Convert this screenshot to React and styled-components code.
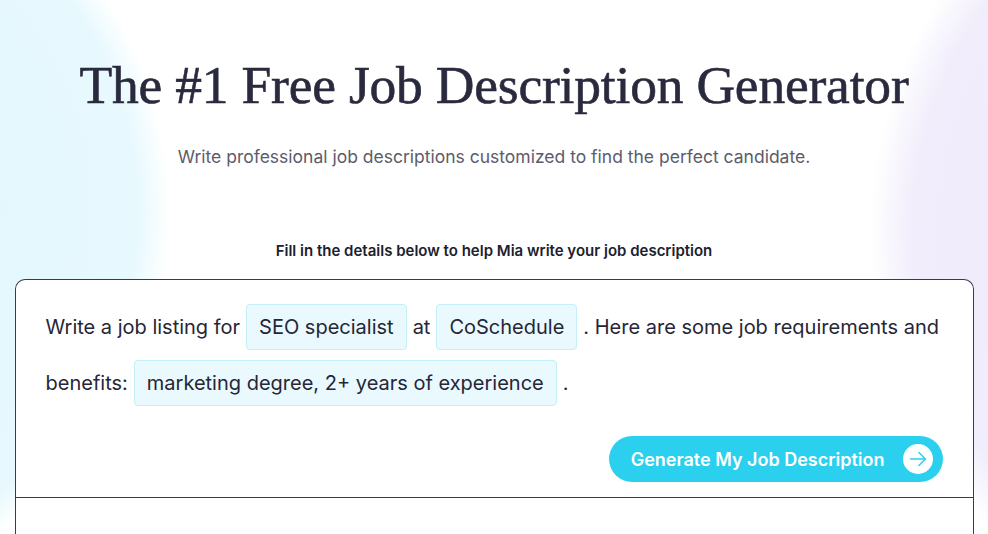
import React from 'react'
import styled, { createGlobalStyle } from 'styled-components'

const GlobalStyle = createGlobalStyle`
  html, body {
    margin: 0;
    padding: 0;
  }
  body {
    font-family: Inter, "Noto Sans", sans-serif;
    background: #ffffff;
    color: #262636;
  }
`;

const Page = styled.div`
  min-height: 534px;
  overflow: hidden;
  background:
    radial-gradient(circle 390px at -220px 210px, #dcf5fd 0%, #e8f9fe 92%, rgba(255,255,255,0) 100%),
    radial-gradient(circle 430px at 1300px 230px, #ebe5fa 0%, #f1edfb 90%, rgba(255,255,255,0) 100%),
    #ffffff;
  display: flex;
  flex-direction: column;
  align-items: center;
`;

const Title = styled.h1`
  margin: 49px 0 0;
  font-family: "Liberation Serif", "DejaVu Serif", serif;
  font-weight: 400;
  font-size: 53.5px;
  line-height: 72px;
  letter-spacing: -0.2px;
  color: #2a2a3e;
  -webkit-text-stroke: 0.6px #2a2a3e;
`;

const Subtitle = styled.p`
  margin: 24px 0 0;
  font-size: 17.5px;
  line-height: 24px;
  color: #5c5c6c;
`;

const Hint = styled.p`
  margin: 72px 0 0;
  font-size: 15px;
  font-weight: 600;
  line-height: 20px;
  color: #20202e;
`;

const Card = styled.div`
  margin-top: 18px;
  width: 959px;
  box-sizing: border-box;
  border: 1px solid #3a3a48;
  border-bottom: none;
  border-radius: 10px 10px 0 0;
  background: #ffffff;
`;

const Editor = styled.div`
  padding: 19px 30px 15px 30px;
  border-bottom: 1px solid #3a3a48;
  display: flex;
  flex-direction: column;
`;

const Prompt = styled.div`
  font-size: 20px;
  line-height: 56px;
  color: #262636;
  display: flex;
  flex-wrap: wrap;
  align-items: center;
  column-gap: 6px;
`;

const Chip = styled.span`
  display: inline-flex;
  align-items: center;
  height: 46px;
  box-sizing: border-box;
  padding: 0 12px;
  background: #e9f9fe;
  border: 1px solid #c4eef8;
  border-radius: 4px;
  line-height: 1;
`;

const Actions = styled.div`
  display: flex;
  justify-content: flex-end;
  margin-top: 25px;
`;

const Button = styled.button`
  display: flex;
  align-items: center;
  gap: 18px;
  height: 46px;
  padding: 0 10px 0 22px;
  border: none;
  border-radius: 23px;
  background: #2bd0ee;
  color: #ffffff;
  font-family: Inter, "Noto Sans", sans-serif;
  font-size: 18px;
  font-weight: 600;
  cursor: pointer;
`;

const ArrowCircle = styled.span`
  width: 30px;
  height: 30px;
  border-radius: 50%;
  background: #ffffff;
  display: flex;
  align-items: center;
  justify-content: center;
`;

const Output = styled.div`
  height: 60px;
`;

const App = () => {
  return (
    <>
      <GlobalStyle />
      <Page>
        <Title>The #1 Free Job Description Generator</Title>
        <Subtitle>Write professional job descriptions customized to find the perfect candidate.</Subtitle>
        <Hint>Fill in the details below to help Mia write your job description</Hint>
        <Card>
          <Editor>
            <Prompt>
              <span>Write a job listing for</span>
              <Chip>SEO specialist</Chip>
              <span>at</span>
              <Chip>CoSchedule</Chip>
              <span>. Here are some job requirements and</span>
              <span>benefits:</span>
              <Chip>marketing degree, 2+ years of experience</Chip>
              <span>.</span>
            </Prompt>
            <Actions>
              <Button>
                Generate My Job Description
                <ArrowCircle>
                  <svg width="22" height="22" viewBox="0 0 24 24" fill="none" stroke="#2bd0ee" strokeWidth="1.6" strokeLinecap="round" strokeLinejoin="round">
                    <path d="M4 12h16" />
                    <path d="M13 5l7 7-7 7" />
                  </svg>
                </ArrowCircle>
              </Button>
            </Actions>
          </Editor>
          <Output />
        </Card>
      </Page>
    </>
  )
}

export default App
